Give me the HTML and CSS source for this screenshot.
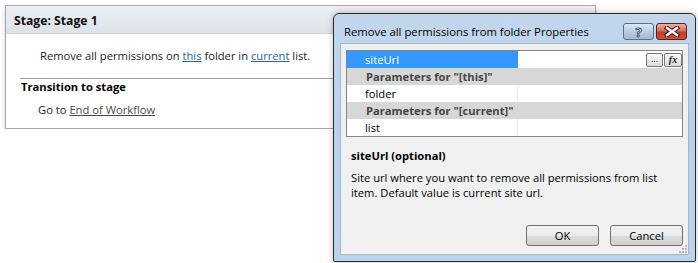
FILE: index.html
```html
<!DOCTYPE html>
<html lang="en">
<head>
    <meta charset="UTF-8">
    <title>Workflow Stage</title>
    <link rel="stylesheet" href="styles.css">
</head>
<body>
    <div class="stage">
        <div class="stage-header">Stage: Stage 1</div>
        <div class="stage-action">Remove all permissions on <a href="#">this</a> folder in <a href="#">current</a> list.</div>
        <div class="stage-transition">
            <div class="transition-title">Transition to stage</div>
            <div class="transition-action">Go to <a href="#" class="grey-link">End of Workflow</a></div>
        </div>
    </div>

    <div class="dialog">
        <div class="dialog-titlebar">
            <span class="dialog-title">Remove all permissions from folder Properties</span>
            <div class="caption-buttons">
                <span class="cap-btn help">?</span>
                <span class="cap-btn close">
                    <svg width="16" height="11" viewBox="0 0 16 11">
                        <path d="M3 2 L13 9 M13 2 L3 9" stroke="#4a1510" stroke-width="4.5" stroke-linecap="square"/>
                        <path d="M3 2 L13 9 M13 2 L3 9" stroke="#fff" stroke-width="2.4" stroke-linecap="square"/>
                    </svg>
                </span>
            </div>
        </div>
        <div class="dialog-body">
            <div class="grid">
                <div class="row selected">
                    <span class="name">siteUrl</span>
                    <span class="value">
                        <span class="mini-btn">...</span>
                        <span class="mini-btn fx"><i>fx</i></span>
                    </span>
                </div>
                <div class="row category">Parameters for "[this]"</div>
                <div class="row">
                    <span class="name">folder</span>
                    <span class="value"></span>
                </div>
                <div class="row category">Parameters for "[current]"</div>
                <div class="row">
                    <span class="name">list</span>
                    <span class="value"></span>
                </div>
            </div>
            <div class="desc">
                <div class="desc-title">siteUrl (optional)</div>
                <div class="desc-text">Site url where you want to remove all permissions from list item. Default value is current site url.</div>
            </div>
            <div class="dialog-buttons">
                <button>OK</button>
                <button>Cancel</button>
            </div>
            <span class="grip">
                <svg width="10" height="10" viewBox="0 0 10 10" fill="#b5b5b5">
                    <rect x="8" y="2" width="2" height="2"/>
                    <rect x="5" y="5" width="2" height="2"/><rect x="8" y="5" width="2" height="2"/>
                    <rect x="2" y="8" width="2" height="2"/><rect x="5" y="8" width="2" height="2"/><rect x="8" y="8" width="2" height="2"/>
                </svg>
            </span>
        </div>
    </div>
</body>
</html>
```

FILE: styles.css
```css
body {
    margin: 0;
    background: #fff;
    font-family: "Open Sans", "Noto Sans", sans-serif;
    font-size: 11.2px;
    color: #1e1e1e;
}
a {
    color: #2c5fa3;
}
.grey-link {
    color: #4a4a4a;
}

/* workflow stage box */
.stage {
    margin: 5px 0 0 5px;
    width: 589px;
    height: 122px;
    border: 1px solid #a9a9a9;
    background: #fff;
    box-shadow: 0 3px 5px rgba(0, 0, 0, 0.18);
}
.stage-header {
    height: 27px;
    line-height: 30px;
    padding-left: 8px;
    font-size: 12.2px;
    font-weight: bold;
    color: #111;
    background: linear-gradient(#eef0f3, #dde1e8);
    border-bottom: 1px solid #d2d6dc;
}
.stage-action {
    padding: 14px 0 0 34px;
    height: 43px;
    box-sizing: border-box;
}
.stage-transition {
    margin: 1px 0 0 14px;
    border-top: 1px solid #a0a0a0;
}
.transition-title {
    font-weight: bold;
    color: #000;
    padding: 0 0 0 1px;
}
.transition-action {
    padding: 8px 0 0 18px;
}

/* properties dialog */
.dialog {
    position: absolute;
    left: 333px;
    top: 13px;
    width: 361px;
    height: 247px;
    border: 1px solid #2b2b2b;
    border-radius: 6px 6px 2px 2px;
    background: linear-gradient(#c2d7ec, #b9d2ec 40%, #bad3ec);
    box-shadow: 0 0 6px rgba(0, 0, 0, 0.25);
    display: flex;
    flex-direction: column;
}
.dialog-titlebar {
    height: 29px;
    display: flex;
    align-items: center;
    justify-content: space-between;
    padding: 0 8px 0 10px;
}
.dialog-title {
    font-size: 11.3px;
    color: #000;
    margin-top: 5px;
}
.caption-buttons {
    display: flex;
    gap: 2px;
    align-self: flex-start;
    margin-top: 9px;
}
.cap-btn {
    width: 29px;
    height: 15px;
    border: 1px solid #5e6e84;
    border-radius: 3px;
    display: flex;
    align-items: center;
    justify-content: center;
}
.cap-btn.help {
    background: linear-gradient(#dce7f3, #bccde2 50%, #a3b9d5);
    color: #e8eef6;
    font-weight: bold;
    font-size: 13px;
    -webkit-text-stroke: 0.8px #3b4a60;
}
.cap-btn.close {
    border-color: #5f2218;
    background: linear-gradient(#eab0a3, #d0705c 45%, #c0402a 55%, #c65238);
}
.dialog-body {
    flex: 1;
    margin: 0 6px 6px 6px;
    background: #f0f0f0;
    border: 1px solid #a4b7cc;
    position: relative;
    padding: 6px 5px 0 5px;
}

/* property grid */
.grid {
    border: 1px solid #848484;
    background: #fff;
}
.row {
    height: 17px;
    display: flex;
    line-height: 17px;
}
.row .name {
    width: 152px;
    padding-left: 18px;
    color: #000;
    border-right: 1px solid #ececec;
}
.row .value {
    flex: 1;
    display: flex;
    justify-content: flex-end;
    gap: 1px;
}
.row.selected .name {
    background: #3399ff;
    color: #fff;
    border-right-color: #3399ff;
}
.row.category {
    background: #d7d7d7;
    padding-left: 19px;
    font-weight: bold;
    color: #454545;
}
.mini-btn {
    width: 15px;
    height: 12px;
    margin-top: 2px;
    border: 1px solid #7a7a7a;
    border-radius: 2px;
    background: linear-gradient(#fafafa, #dcdcdc);
    font-size: 9px;
    line-height: 9px;
    text-align: center;
    color: #222;
}
.mini-btn.fx {
    width: 16px;
    font-size: 10px;
    line-height: 12px;
    font-family: "Liberation Serif", serif;
    font-weight: bold;
}

/* description */
.desc {
    padding: 11px 0 0 5px;
}
.desc-title {
    font-weight: bold;
    color: #000;
}
.desc-text {
    margin-top: 7px;
    width: 330px;
    color: #000;
    line-height: 15px;
}
.dialog-buttons {
    display: flex;
    justify-content: flex-end;
    gap: 11px;
    margin-top: 25px;
}
.dialog-buttons button {
    width: 73px;
    height: 21px;
    font-family: inherit;
    font-size: 11.2px;
    color: #000;
    border: 1px solid #707070;
    border-radius: 3px;
    background: linear-gradient(#f2f2f2, #ebebeb 50%, #dddddd 51%, #cfcfcf);
    padding: 0;
}
.grip {
    position: absolute;
    right: 1px;
    bottom: 1px;
    line-height: 0;
}
```
